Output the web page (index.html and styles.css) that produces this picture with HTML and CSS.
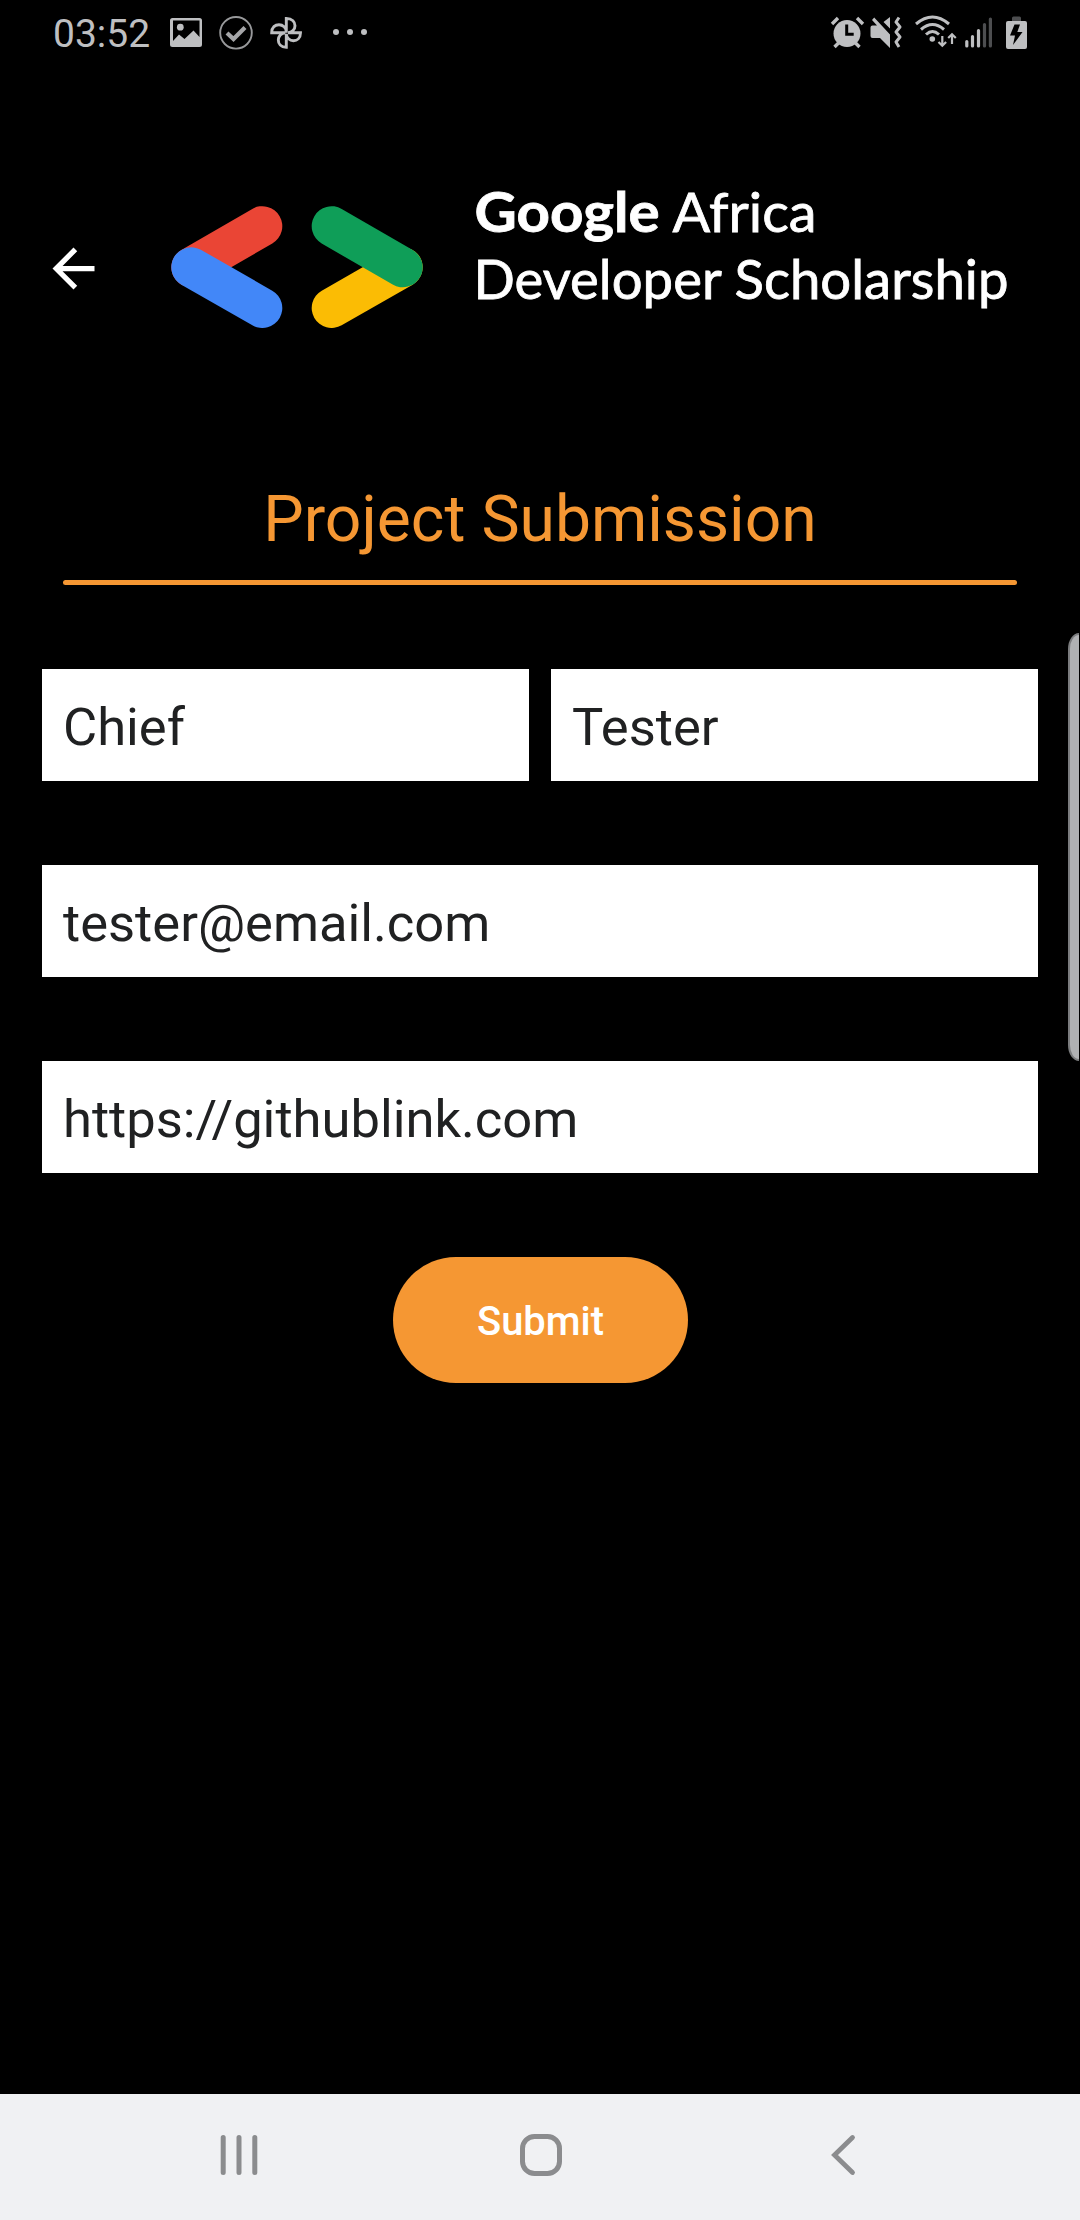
FILE: index.html
```html
<!DOCTYPE html>
<html lang="en">
<head>
<meta charset="utf-8">
<title>Project Submission</title>
<link rel="stylesheet" href="styles.css">
</head>
<body>
<div class="screen">
  <header class="status-bar">
    <div class="status-left">
      <span class="clock">03:52</span>
      <svg class="icon-picture" width="34" height="36" viewBox="169 15 34 36">
        <path fill="#bebfc1" fill-rule="evenodd" d="M172.500 18h27q2.500 0 2.500 2.500v24q0 2.500-2.500 2.500h-27q-2.500 0-2.500-2.500v-24q0-2.500 2.500-2.500zM173 20.500v20.500l6-6.500 5.500 4.500 9-8.500 6 6.500v-16.500z"/>
        <circle cx="180.300" cy="27.200" r="3.400" fill="#bebfc1"/>
      </svg>
      <svg class="icon-check" width="36" height="36" viewBox="218 15 36 36" fill="none">
        <circle cx="236" cy="32.800" r="15.800" stroke="#98999b" stroke-width="1.900"/>
        <path d="M227 33l6.500 6 11.500-11.500" stroke="#a5a6a8" stroke-width="4.200"/>
      </svg>
      <svg class="icon-pinwheel" width="36" height="36" viewBox="268 15 36 36" fill="none" stroke="#bebfc1" stroke-width="2.900">
        <path d="M286.300 32.700V18.500c6 0 8.700 3.500 8.700 7.200s-3 7-7 7h12.500c0 5.500-3.500 8-7.100 8s-7.100-3-7.100-7v13.500c-5.500 0-8-3.500-8-7.200s3-7.300 7-7.300h-13.600c0-5.500 3.500-8 7.300-8s7.300 3 7.300 7z"/>
      </svg>
      <svg class="icon-more" width="36" height="36" viewBox="332 15 36 36" fill="#bebfc1">
        <circle cx="336" cy="32" r="3"/><circle cx="350" cy="32" r="3"/><circle cx="364" cy="32" r="3"/>
      </svg>
    </div>
    <svg class="status-right" width="198" height="36" viewBox="830 15 198 36" fill="none" stroke="#bebfc1">
      <circle cx="847" cy="33.500" r="13.500" fill="#bebfc1" stroke="none"/>
      <path d="M832 24l6-6M863 24l-6-6M834.500 47l4-4M859.500 47l-4-4" stroke-width="3.400"/>
      <path d="M846.700 24.500v9.800h7" stroke="#000" stroke-width="3"/>
      <path d="M870.500 27.500q0-2 2-2h4.500l-5-5.500 2.200-2.500 15.800 17v13.500l-10-10h-7.500q-2 0-2-2zM883.500 22l6.500-5v11.500z" fill="#bebfc1" stroke="none"/>
      <path d="M899 17.500l-3 4.500 4 5-4 5 4 5-4 5 3 5" stroke-width="3" stroke-linejoin="round"/>
      <path d="M916 24q16.500-14 33 0M921 29.500q11.500-10 23 0M926 34.500q6.500-6 13 0" stroke-width="3"/>
      <circle cx="932.300" cy="39" r="2.800" fill="#bebfc1" stroke="none"/>
      <path d="M942.300 36v9M938.500 42l3.800 3.800 3.800-3.800M952 44v-9.500M948.200 38l3.800-3.800 3.800 3.800" stroke-width="2.200"/>
      <path d="M966.800 41.500v4.500M972.500 36.500v9.500M978.500 30.500v15.500" stroke-width="3.200" stroke-linecap="round"/>
      <path d="M984.500 24.500v21.500M990.400 19v27" stroke="#4d4e50" stroke-width="3.200" stroke-linecap="round"/>
      <path d="M1012 22v-4q0-1.500 1.500-1.500h6q1.500 0 1.500 1.500v4z" fill="#4d4e50" stroke="none"/>
      <rect x="1006" y="21" width="21" height="28" rx="2" fill="#bebfc1" stroke="none"/>
      <path d="M1014.500 24.500h5.500l-2.700 7.500h5.200l-9.500 13 2-9.500h-5z" fill="#000" stroke="none"/>
    </svg>
  </header>

  <div class="app-bar">
    <svg class="back" width="63" height="63" viewBox="0 0 24 24"><path fill="#fff" d="M20 11H7.830l5.590-5.590L12 4l-8 8 8 8 1.410-1.410L7.830 13H20z"/></svg>
    <svg class="logo" width="252" height="122" viewBox="171 206 252 122" fill="none" stroke-width="40" stroke-linecap="round">
      <path stroke="#ea4535" d="M262.300 226.200L191.300 267.300"/>
      <path stroke="#4287f8" d="M191.300 267.300l71 40.700"/>
      <path stroke="#fbbc04" d="M331.700 308l71-40.700"/>
      <path stroke="#0f9e58" d="M331.700 226.200l71 41.100"/>
    </svg>
    <svg class="wordmark" width="550" height="160" viewBox="472 165 550 160">
      <text class="word-bold" x="474.500" y="232" textLength="185" lengthAdjust="spacingAndGlyphs">Google</text>
      <text class="word" x="672.500" y="232" textLength="144" lengthAdjust="spacingAndGlyphs">Africa</text>
      <text class="word" x="473.500" y="298.500" textLength="535" lengthAdjust="spacingAndGlyphs">Developer Scholarship</text>
    </svg>
  </div>

  <main class="form">
    <h1 class="title">Project Submission</h1>
    <div class="rule"></div>
    <div class="name-row">
      <div class="field">Chief</div>
      <div class="field">Tester</div>
    </div>
    <div class="field">tester@email.com</div>
    <div class="field">https://githublink.com</div>
    <button class="submit" type="button">Submit</button>
  </main>

  <nav class="nav-bar">
    <svg width="44" height="44" viewBox="0 0 44 44" stroke="#8b8c8e" stroke-width="5" stroke-linecap="round"><path d="M6.200 4.500v35M22 4.500v35M37.800 4.500v35"/></svg>
    <svg width="44" height="44" viewBox="0 0 44 44" fill="none" stroke="#8b8c8e" stroke-width="5"><rect x="3.500" y="3.500" width="37" height="37" rx="12"/></svg>
    <svg width="44" height="44" viewBox="0 0 44 44" fill="none" stroke="#8b8c8e" stroke-width="4.800" stroke-linecap="round"><path d="M31.500 4.500L13.500 22l18 17.500"/></svg>
  </nav>
  <div class="edge-handle"></div>
</div>
</body>
</html>
```
FILE: styles.css
```css
* { box-sizing: border-box; }
body { margin: 0; background: #000; font-family: Roboto, "Liberation Sans", sans-serif; }
svg { display: block; flex: none; }
.screen { position: relative; width: 1080px; height: 2220px; display: flex; flex-direction: column; background: #000; overflow: hidden; }
.status-bar { height: 66px; display: flex; justify-content: space-between; padding: 0 52px 0 53px; }
.status-left { display: flex; }
.status-right, .status-left svg { margin-top: 15px; }
.clock { width: 116px; font-size: 39px; line-height: 46px; padding-top: 11px; color: #bebfc1; }
.icon-check { margin-left: 15px; }
.icon-pinwheel { margin-left: 14px; }
.icon-more { margin-left: 28px; }
.app-bar { height: 404px; display: flex; align-items: flex-start; padding: 99px 0 0 42px; }
.back { margin-top: 72px; }
.logo { margin: 41px 0 0 66px; }
.wordmark { margin-left: 49px; }
.word, .word-bold { font-family: Lato, sans-serif; font-size: 55px; fill: #fff; stroke: #fff; stroke-width: 0.8px; }
.word-bold { font-weight: 700; }
.form { flex: 1; display: flex; flex-direction: column; padding: 0 42px; }
.title { margin: 12px 0 0; height: 83px; line-height: 74px; font-size: 64.2px; font-weight: 400; text-align: center; white-space: nowrap; color: #f59733; }
.rule { height: 5px; margin: 15px 21px 84px; border-radius: 3px; background: #f59733; }
.name-row { display: grid; grid-template-columns: 1fr 1fr; gap: 22px; }
.field { height: 112px; padding: 27px 21px 0; line-height: 62px; font-size: 52.5px; color: #202122; background: #fff; white-space: nowrap; }
.form > .field { margin-top: 84px; }
.submit { align-self: center; width: 295px; height: 126px; margin: 84px 0 0 1px; padding: 4px 0 0; border: 0; border-radius: 63px; background: #f59733; color: #fff; font: 500 39.900px/46px Roboto, sans-serif; }
.nav-bar { height: 126px; display: flex; align-items: center; justify-content: space-between; padding: 0 215px 4px 217px; background: #f0f1f3; }
.edge-handle { position: absolute; left: 1068px; top: 633px; width: 11px; height: 428px; border: 2px solid #7b7c7e; border-right: 0; border-radius: 11px 0 0 11px / 16px 0 0 16px; background: #b0b1b3; }
```
